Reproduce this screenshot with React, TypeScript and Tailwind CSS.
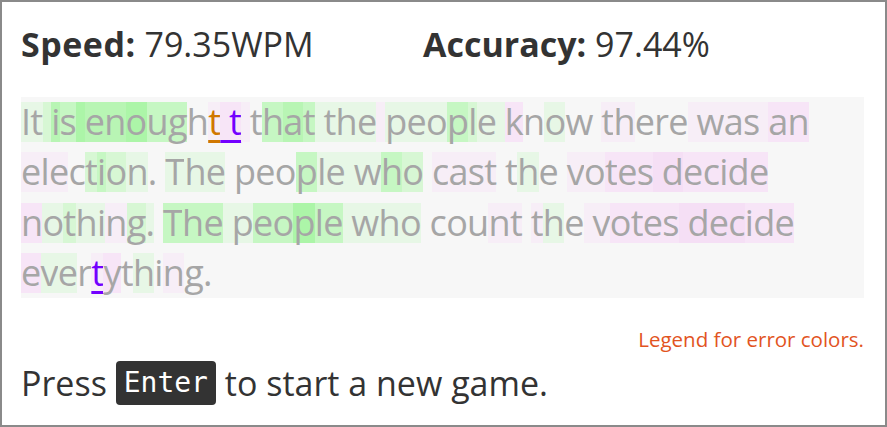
import React from "react";

const BG: Record<string, string> = {
  ".": "",
  a: "bg-[#e7f7e6]",
  b: "bg-[#d7f7d4]",
  c: "bg-[#c6f7c3]",
  d: "bg-[#b8f5b4]",
  e: "bg-[#acf5a8]",
  p: "bg-[#f7eef7]",
  q: "bg-[#f7e5f7]",
  r: "bg-[#f5dff5]",
};

type Line = { text: string; codes: string; marks?: Record<number, "o" | "v"> };

const LINES: Line[] = [
  {
    text: "It is enought t that the people know there was an",
    codes: "aabdceddecc." + "pqqp" + ".cdca" + "aaap" + "aaacbaa" + "q.a.." + "pp..." + "pppppqq",
    marks: { 12: "o", 13: "v", 14: "v" },
  },
  {
    text: "election. The people who cast the votes decide",
    codes: "ppp." + "bcba" + ".." + "aaa." + "...c" + "aaaa" + "cb." + "pppp" + ".." + "a.." + "ppqqq" + "rr" + "qqqqq",
  },
  {
    text: "nothing. The people who count the votes decide",
    codes: "qabaapba." + "ccca" + "accecc" + "aaaa" + "...." + "pp.pa." + "pp" + "qqqq" + "rrrr" + "qqq",
  },
  {
    text: "evertything.",
    codes: "qaa.pq.a.p..",
    marks: { 4: "v" },
  },
];

function Char({ ch, code, mark }: { ch: string; code: string; mark?: "o" | "v" }) {
  let cls = "inline-block h-[40px] leading-[40px] whitespace-pre tracking-[-0.7px] " + (BG[code] || "");
  if (mark === "o") cls += " text-[#d07800] underline decoration-[3px] underline-offset-[5px] decoration-[#d07800]";
  if (mark === "v") cls += " text-[#7300ff] underline decoration-[3px] underline-offset-[5px] decoration-[#7300ff]";
  return <span className={cls}>{ch}</span>;
}

export default function App() {
  return (
    <div
      className="w-[887px] h-[427px] border-2 border-[#8a8a8a] bg-white pl-[19px] pr-[21px] text-[#333333]"
      style={{ fontFamily: '"Open Sans", "Noto Sans", sans-serif' }}
    >
      <div className="flex pt-[22px] text-[34px] leading-[1.2]">
        <div className="w-[402px]">
          <span className="font-bold tracking-[0.5px]">Speed:</span> 79.35WPM
        </div>
        <div>
          <span className="font-bold">Accuracy:</span> 97.44%
        </div>
      </div>
      <div className="mt-[32px] bg-[#f7f7f7] text-[36px] text-[#a6a6a6]">
        {LINES.map((line, li) => (
          <div key={li} className="flex items-center h-[50.4px]">
            {line.text.split("").map((ch, i) => (
              <Char key={i} ch={ch} code={line.codes[i] || "."} mark={line.marks?.[i]} />
            ))}
          </div>
        ))}
      </div>
      <div className="mt-[29px] flex justify-end text-[20.5px] leading-[1.2] text-[#e2541f]">
        Legend for error colors.
      </div>
      <div className="mt-[9px] flex items-center text-[34px] leading-[44px] whitespace-pre">
        <span>Press </span>
        <span
          className="inline-block h-[44px] rounded-[4px] bg-[#333333] px-[8px] text-[28px] leading-[44px] text-white"
          style={{ fontFamily: '"DejaVu Sans Mono", monospace' }}
        >
          Enter
        </span>
        <span> to start a new game.</span>
      </div>
    </div>
  );
}
